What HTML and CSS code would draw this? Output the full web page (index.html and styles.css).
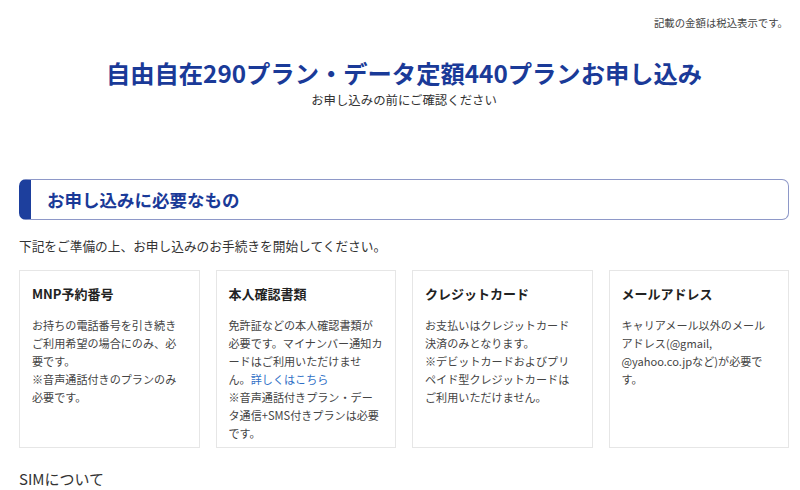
FILE: index.html
```html
<!DOCTYPE html>
<html lang="ja">
<head>
<meta charset="utf-8">
<link rel="stylesheet" href="styles.css">
</head>
<body>
<div class="page">
  <p class="tax-note">記載の金額は税込表示です。</p>
  <header class="hero">
    <h1 class="hero-title">自由自在290プラン・データ定額440プランお申し込み</h1>
    <p class="hero-sub">お申し込みの前にご確認ください</p>
  </header>
  <section class="section">
    <div class="section-head">
      <h2 class="section-title">お申し込みに必要なもの</h2>
    </div>
    <p class="lead">下記をご準備の上、お申し込みのお手続きを開始してください。</p>
    <div class="cards">
      <div class="card">
        <h3 class="card-title">MNP予約番号</h3>
        <p class="card-text">お持ちの電話番号を引き続き<br>ご利用希望の場合にのみ、必<br>要です。<br>※音声通話付きのプランのみ<br>必要です。</p>
      </div>
      <div class="card">
        <h3 class="card-title">本人確認書類</h3>
        <p class="card-text">免許証などの本人確認書類が<br>必要です。マイナンバー通知カ<br>ードはご利用いただけませ<br>ん。<a class="link" href="#">詳しくはこちら</a><br>※音声通話付きプラン・デー<br>タ通信+SMS付きプランは必要<br>です。</p>
      </div>
      <div class="card">
        <h3 class="card-title">クレジットカード</h3>
        <p class="card-text">お支払いはクレジットカード<br>決済のみとなります。<br>※デビットカードおよびプリ<br>ペイド型クレジットカードは<br>ご利用いただけません。</p>
      </div>
      <div class="card">
        <h3 class="card-title">メールアドレス</h3>
        <p class="card-text">キャリアメール以外のメール<br>アドレス(@gmail,<br>@yahoo.co.jpなど)が必要で<br>す。</p>
      </div>
    </div>
    <h2 class="sub-head">SIMについて</h2>
  </section>
</div>
</body>
</html>
```
FILE: styles.css
```css
html, body {
  margin: 0;
  padding: 0;
  background: #fff;
}
body {
  font-family: "Noto Sans CJK JP", "Noto Sans", sans-serif;
  color: #333;
}
.page {
  padding: 0 11px 0 19px;
}
.tax-note {
  margin: 0;
  padding-top: 15px;
  text-align: right;
  font-size: 10.4px;
  line-height: 16px;
  color: #444;
  padding-right: 1px;
}
.hero {
  text-align: center;
  margin-top: 24px;
}
.hero-title {
  margin: 0;
  font-size: 24.3px;
  line-height: 36px;
  font-weight: 700;
  color: #1a3a98;
}
.hero-sub {
  margin: 0;
  font-size: 12.4px;
  line-height: 18px;
  color: #333;
}
.section {
  margin-top: 70px;
}
.section-head {
  height: 39px;
  border: 1px solid #8e98c8;
  border-left: 12px solid #1d3f9d;
  border-radius: 7px;
  display: flex;
  align-items: center;
  padding-left: 16px;
}
.section-title {
  margin: 0;
  font-size: 17.5px;
  font-weight: 700;
  color: #1a3a98;
  line-height: 24px;
}
.lead {
  margin: 17px 0 0;
  font-size: 12.7px;
  line-height: 18px;
  color: #333;
}
.cards {
  margin-top: 15px;
  display: grid;
  grid-template-columns: repeat(4, 1fr);
  gap: 16px;
}
.card {
  border: 1px solid #e6e6e6;
  padding: 14px 6px 5px 12px;
}
.card-title {
  margin: 0;
  font-size: 13px;
  line-height: 18px;
  font-weight: 700;
  color: #222;
}
.card-text {
  margin: 13px 0 0;
  font-size: 11.1px;
  line-height: 18px;
  color: #444;
  white-space: nowrap;
}
.link {
  color: #2f6fc6;
  text-decoration: none;
}
.sub-head {
  margin: 20px 0 0;
  font-size: 15px;
  font-weight: 400;
  line-height: 22px;
  color: #333;
}
```
